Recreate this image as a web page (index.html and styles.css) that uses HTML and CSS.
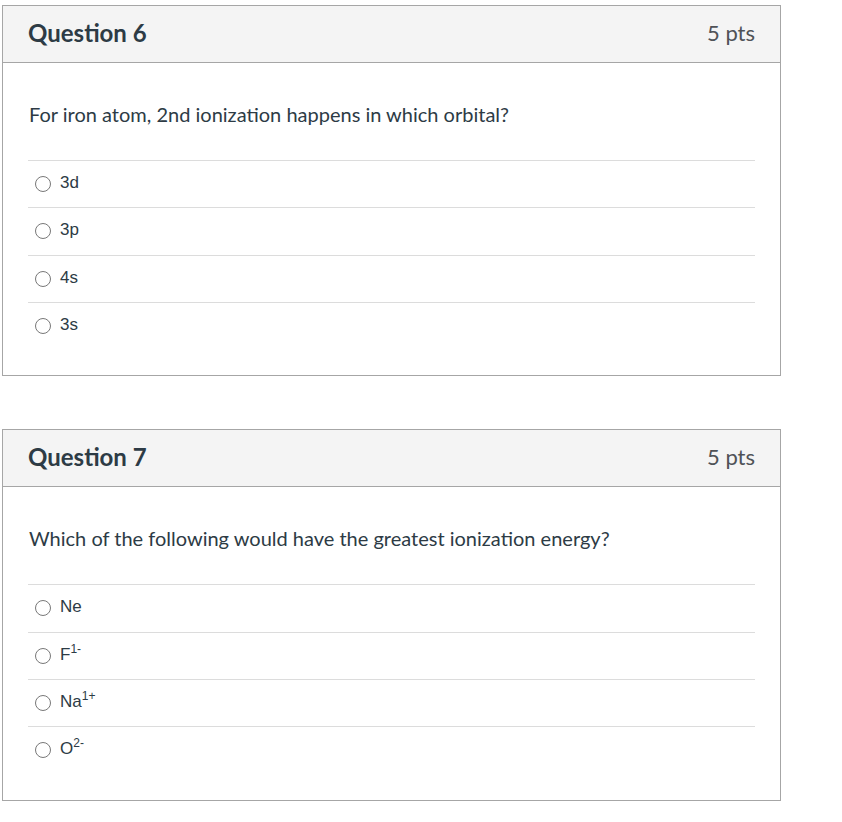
FILE: index.html
```html
<!DOCTYPE html>
<html>
<head>
<meta charset="utf-8">
<link rel="stylesheet" href="styles.css">
</head>
<body>
<div class="page">
  <div class="question">
    <div class="q-header">
      <span class="q-title">Question 6</span>
      <span class="q-points">5 pts</span>
    </div>
    <div class="q-body">
      <div class="q-text">For iron atom, 2nd ionization happens in which orbital?</div>
      <div class="answers">
        <div class="answer"><span class="radio"></span><span class="label">3d</span></div>
        <div class="answer"><span class="radio"></span><span class="label">3p</span></div>
        <div class="answer"><span class="radio"></span><span class="label">4s</span></div>
        <div class="answer"><span class="radio"></span><span class="label">3s</span></div>
      </div>
    </div>
  </div>
  <div class="question">
    <div class="q-header">
      <span class="q-title">Question 7</span>
      <span class="q-points">5 pts</span>
    </div>
    <div class="q-body">
      <div class="q-text">Which of the following would have the greatest ionization energy?</div>
      <div class="answers">
        <div class="answer"><span class="radio"></span><span class="label">Ne</span></div>
        <div class="answer"><span class="radio"></span><span class="label">F<sup>1-</sup></span></div>
        <div class="answer"><span class="radio"></span><span class="label">Na<sup>1+</sup></span></div>
        <div class="answer"><span class="radio"></span><span class="label">O<sup>2-</sup></span></div>
      </div>
    </div>
  </div>
</div>
</body>
</html>
```

FILE: styles.css
```css
html, body {
  margin: 0;
  padding: 0;
  background: #ffffff;
}
.page {
  padding: 5px 0 0 2px;
  display: flex;
  flex-direction: column;
  gap: 53px;
  width: 779px;
}
.question {
  border: 1px solid #a6a6a6;
  background: #fff;
  color: #2d3b45;
  font-family: Lato, "Liberation Sans", sans-serif;
}
.q-header {
  height: 57px;
  box-sizing: border-box;
  background: #f4f4f4;
  border-bottom: 1px solid #a6a6a6;
  display: flex;
  align-items: center;
  justify-content: space-between;
  padding: 0 25px 3px 25px;
}
.q-title {
  font-size: 24px;
  font-weight: bold;
  color: #2d3b45;
}
.q-points {
  font-size: 22px;
  color: #4f5257;
}
.q-body {
  padding: 37px 25px 26px 25px;
}
.q-text {
  font-size: 20px;
  line-height: 28px;
  margin-left: 1px;
}
.answers {
  margin-top: 32px;
}
.answer {
  height: 46.33px;
  border-top: 1px solid #dcdcdc;
  display: flex;
  align-items: center;
  font-family: "Liberation Sans", Arial, sans-serif;
  font-size: 17px;
}
.radio {
  width: 14px;
  height: 14px;
  border: 1px solid #787878;
  border-radius: 50%;
  margin-left: 7px;
  margin-right: 9px;
  box-sizing: content-box;
  flex: none;
}
.label {
  color: #2d3b45;
  margin-top: -2px;
}
.label sup {
  font-size: 12px;
  line-height: 0;
}
```
